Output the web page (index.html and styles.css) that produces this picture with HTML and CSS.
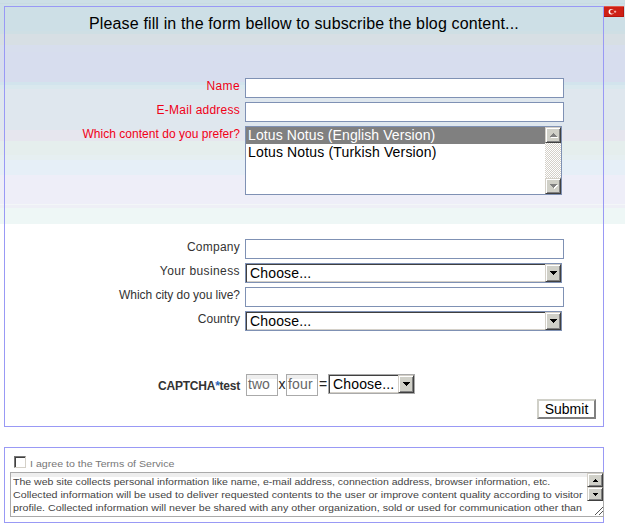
FILE: index.html
```html
<!DOCTYPE html>
<html lang="en">
<head>
<meta charset="utf-8">
<title>Subscribe</title>
<link rel="stylesheet" href="styles.css">
</head>
<body>
<div class="top">
<main class="form">
  <h1><span>Please fill in the form bellow to subscribe the blog content...</span></h1>
  <div class="rows required">
    <div class="row"><label class="wide">Name</label><div class="field"></div></div>
    <div class="row"><label class="loose">E-Mail address</label><div class="field"></div></div>
    <div class="row"><label>Which content do you prefer?</label>
      <div class="list">
        <div class="options"><div class="option selected">Lotus Notus (English Version)</div><div class="option">Lotus Notus (Turkish Version)</div></div>
        <div class="track">
          <div class="btn"><svg width="9" height="5" shape-rendering="crispEdges"><path d="M5 1L9 5H1Z" fill="#fff"/><path d="M4 0L8 4H0Z" fill="#808080"/></svg></div>
          <div class="btn"><svg width="9" height="5" shape-rendering="crispEdges"><path d="M1 1H9L5 5Z" fill="#fff"/><path d="M0 0H8L4 4Z" fill="#808080"/></svg></div>
        </div>
      </div>
    </div>
  </div>
  <div class="rows optional">
    <div class="row"><label class="loose">Company</label><div class="field"></div></div>
    <div class="row"><label class="wide">Your business</label><div class="select"><span>Choose...</span><div class="btn"><svg width="7" height="4" shape-rendering="crispEdges"><path d="M0 0H7V1H6V2H5V3H4V4H3V3H2V2H1V1H0Z"/></svg></div></div></div>
    <div class="row"><label class="tight">Which city do you live?</label><div class="field"></div></div>
    <div class="row"><label>Country</label><div class="select"><span>Choose...</span><div class="btn"><svg width="7" height="4" shape-rendering="crispEdges"><path d="M0 0H7V1H6V2H5V3H4V4H3V3H2V2H1V1H0Z"/></svg></div></div></div>
  </div>
  <div class="captcha">
    <label>CAPTCHA<span class="star">*</span>test</label>
    <div class="num">two</div><span class="op">x</span><div class="num four">four</div><span class="op eq">=</span>
    <div class="select small"><span>Choose...</span><div class="btn"><svg width="7" height="4" shape-rendering="crispEdges"><path d="M0 0H7V1H6V2H5V3H4V4H3V3H2V2H1V1H0Z"/></svg></div></div>
  </div>
  <div class="actions"><div class="submit">Submit</div></div>
</main>
<svg class="flag" width="20" height="11" viewBox="0 0 20 11"><rect width="20" height="11" fill="#b5140c"/><rect width="19" height="10" fill="#ce2015"/><path d="M0 .5H20" stroke="#e0584c"/><circle cx="7.3" cy="5.7" r="2.7" fill="#fff"/><circle cx="8.2" cy="5.7" r="2.1" fill="#ce2015"/><path d="M10 5.7h2.2M11.1 4.6v2.2" stroke="#f5c0ba"/></svg>
</div>
<section class="terms">
  <div class="agree"><span class="check"></span><span class="agree-text">I agree to the Terms of Service</span></div>
  <div class="textarea">
    <div class="copy">
      <div class="l1">The web site collects personal information like name, e-mail address, connection address, browser information, etc.</div>
      <div class="l2">Collected information will be used to deliver requested contents to the user or improve content quality according to visitor</div>
      <div class="l3">profile. Collected information will never be shared with any other organization, sold or used for communication other than</div>
    </div>
    <div class="side">
      <div class="btn"><svg width="5" height="3" shape-rendering="crispEdges"><path d="M2 0H3V1H4V2H5V3H0V2H1V1H2Z"/></svg></div>
      <div class="btn"><svg width="5" height="3" shape-rendering="crispEdges"><path d="M0 0H5V1H4V2H3V3H2V2H1V1H0Z"/></svg></div>
      <svg class="grip" width="8" height="8"><path d="M0 8L8 0M4 8L8 4" stroke="#555"/></svg>
    </div>
  </div>
</section>
</body>
</html>
```
FILE: styles.css
```css
* { box-sizing: border-box; }
body {
  margin: 0;
  padding: 6px 0 0 4px;
  height: 528px;
  overflow: hidden;
  font-family: "Liberation Sans", Arial, sans-serif;
  background: #fff linear-gradient(#cddfe6 0 3px, #c9dbe2 3px 4px, #cddfe6 4px 31px, #cfdfe4 31px 34px, #d7dfe4 34px 45px, #d7deed 45px 52px, #d7ddee 52px 82px, #d2e4ed 82px 85px, #d9e8ee 85px 89px, #dfe7ee 89px 130px, #e6e6ee 130px 141px, #e5eeed 141px 155px, #e6eff1 155px 160px, #e6eff7 160px 175px, #eeeef8 175px 204px, #f3f6f8 204px 205px, #eeeff6 205px 208px, #eef7f6 208px 224px, #fff 224px) no-repeat;
}
.top { display: flex; align-items: flex-start; }
.form { width: 600px; height: 421px; border: 1px solid #9999f5; }
.flag { display: block; }
h1 { margin: 0; height: 71px; padding: 7px 0 0 84px; font-weight: 400; font-size: 16px; line-height: 20px; white-space: nowrap; color: #000; letter-spacing: .145px; }
.rows { display: grid; gap: 4px; }
.row { display: flex; align-items: flex-start; gap: 5px; }
label { width: 235px; text-align: right; font-size: 12px; line-height: 16px; white-space: nowrap; color: #333; letter-spacing: .03px; }
.required label { color: #f00017; }
label.wide { letter-spacing: .4px; }
label.loose { letter-spacing: .24px; }
label.tight { letter-spacing: -.05px; }
.field { width: 319px; height: 20px; background: #fff; border: 1px solid #7f91b4; }
.list { display: flex; width: 317px; height: 69px; background: #fff; border: 1px solid #7f91b4; }
.options { flex: 1; }
.option { height: 17px; line-height: 17px; font-size: 14px; padding-left: 2px; white-space: nowrap; color: #000; letter-spacing: .16px; }
.option.selected { background: #808080; color: #fff; letter-spacing: .1px; }
.track { display: flex; flex-direction: column; justify-content: space-between; width: 16px; background: repeating-conic-gradient(#d4d0c8 0 25%, #fff 0 50%) 0 0 / 2px 2px; }
.btn { display: flex; align-items: center; justify-content: center; width: 16px; height: 16px; background: #d0d0c8; border: 1px solid; border-color: #d4d0c8 #404040 #404040 #d4d0c8; box-shadow: inset 1px 1px #fff, inset -1px -1px #808080; }
.optional { margin-top: 44px; }
.select { display: flex; width: 317px; height: 20px; background: #fff; border: 1px solid #7f91b4; box-shadow: inset 1px 1px #404040, inset -1px -1px #d4d0c8; font-size: 14px; line-height: 19px; color: #000; }
.select span { flex: 1; padding-left: 4px; white-space: nowrap; letter-spacing: .15px; }
.select .btn { height: 18px; }
.captcha { display: flex; height: 22px; margin-top: 43px; font-size: 14px; }
.captcha label { font-weight: 700; line-height: 24px; margin-right: 6px; letter-spacing: -.23px; }
.star { color: #2864bc; }
.num { width: 32px; height: 22px; border: 1px solid #aaa; background: linear-gradient(#eee 4px, #fff 4px); color: #666; line-height: 19px; padding-left: 1px; }
.num.four { letter-spacing: .2px; }
.op { width: 8px; text-align: center; line-height: 20px; color: #222; }
.eq { width: 10px; }
.select.small { width: 87px; border-color: #aaa; }
.actions { display: flex; justify-content: flex-end; padding: 3px 7px 0 0; }
.submit { width: 59px; height: 20px; border: 2px solid; border-color: #d0d0c8 #808080 #808080 #d0d0c8; background: #fff; font-size: 14px; line-height: 16px; text-align: center; color: #000; }
.terms { width: 600px; height: 76px; margin-top: 20px; border: 1px solid #9999f5; padding-left: 5px; }
.agree { display: flex; align-items: center; height: 24px; padding: 5px 0 0 4px; gap: 4px; font-size: 9px; color: #777; }
.check { width: 12px; height: 12px; margin-top: -1px; border: 1px solid; border-color: #777 #d4d0c8 #d4d0c8 #777; box-shadow: inset 1px 1px #404040; background: #fff; }
.agree-text { line-height: 12px; padding-top: 2px; white-space: nowrap; transform: scaleX(1.18); transform-origin: left; }
.textarea { display: flex; width: 594px; height: 45px; border: 1px solid #aaa; background: linear-gradient(#eee 4px, #fff 4px); }
.copy { flex: 1; min-width: 0; padding: 3px 0 0 2px; font-size: 9px; line-height: 13px; color: #444; white-space: nowrap; }
.l1, .l2, .l3 { width: max-content; transform: scaleX(1.186); transform-origin: left; }
.l1 { transform: scaleX(1.17); }
.side { display: flex; flex-direction: column; align-items: flex-end; width: 16px; }
.side .btn { height: 14px; }
.grip { margin-top: 6px; }
```
